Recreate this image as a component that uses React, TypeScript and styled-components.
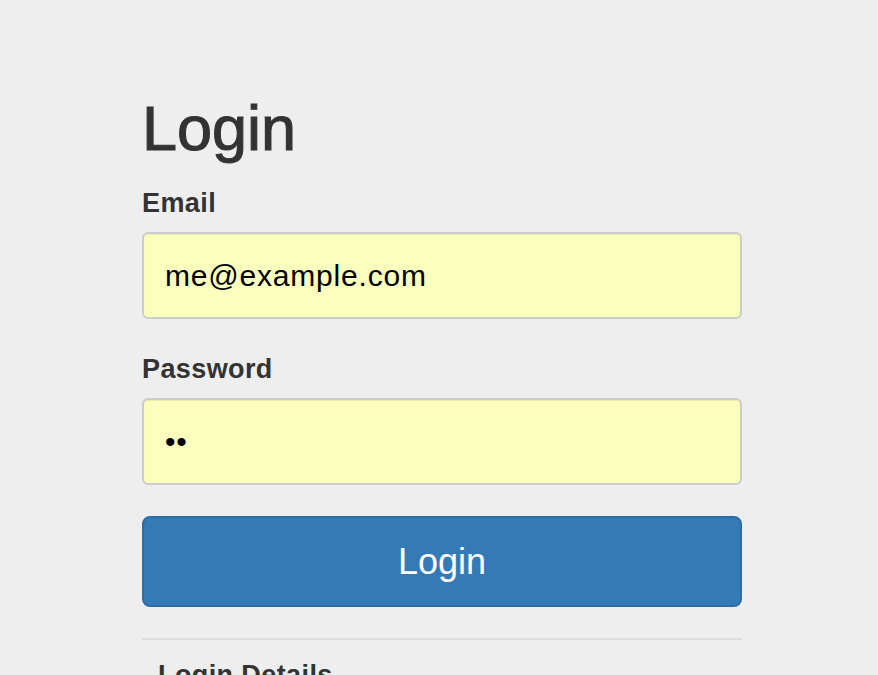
import styled, { createGlobalStyle } from "styled-components";
import { FC } from "react";

const GlobalStyle = createGlobalStyle`
  body {
    margin: 0;
    background-color: #eeeeee;
    font-family: "Liberation Sans", Helvetica, Arial, sans-serif;
    color: #333333;
  }
`;

const Page = styled.div`
  padding: 94px 0 0 142px;
  min-height: 675px;
  box-sizing: border-box;
  overflow: hidden;
`;

const Form = styled.form`
  width: 600px;
  display: flex;
  flex-direction: column;
`;

const Title = styled.h1`
  margin: 0 0 24px;
  font-size: 63px;
  line-height: 69px;
  font-weight: 500;
  color: #333333;
  -webkit-text-stroke: 1.1px #333333;
`;

const Group = styled.div<{ $gap: number }>`
  display: flex;
  flex-direction: column;
  margin-bottom: ${(p) => p.$gap}px;
`;

const Label = styled.label`
  display: block;
  margin-bottom: 13px;
  font-size: 27px;
  line-height: 32px;
  font-weight: 700;
  letter-spacing: 0.4px;
  color: #333333;
`;

const Input = styled.input`
  box-sizing: border-box;
  width: 100%;
  height: 87px;
  padding: 0 21px;
  border: 2px solid #cccccc;
  border-radius: 6px;
  background-color: #faffbd;
  box-shadow: inset 0 1px 1px rgba(0, 0, 0, 0.075);
  font-family: "Liberation Sans", Helvetica, Arial, sans-serif;
  font-size: 30px;
  letter-spacing: 0.8px;
  color: #000000;
  outline: none;
`;

const Button = styled.button`
  box-sizing: border-box;
  width: 100%;
  height: 91px;
  border: 2px solid #2e6da4;
  border-radius: 8px;
  background-color: #337ab7;
  color: #ffffff;
  font-family: "Liberation Sans", Helvetica, Arial, sans-serif;
  font-size: 36px;
  cursor: pointer;
`;

const Divider = styled.hr`
  margin: 31px 0 0;
  border: 0;
  border-top: 2px solid #dddddd;
`;

const Details = styled.h4`
  margin: 19px 0 0;
  padding-left: 16px;
  font-size: 27px;
  line-height: 32px;
  font-weight: 700;
  letter-spacing: 0.4px;
  color: #333333;
`;

const App: FC = () => {
  return (
    <>
      <GlobalStyle />
      <Page>
        <Form onSubmit={(e) => e.preventDefault()}>
          <Title>Login</Title>
          <Group $gap={34}>
            <Label htmlFor="email">Email</Label>
            <Input id="email" type="email" defaultValue="me@example.com" />
          </Group>
          <Group $gap={31}>
            <Label htmlFor="password">Password</Label>
            <Input id="password" type="password" defaultValue="ab" />
          </Group>
          <Button type="submit">Login</Button>
          <Divider />
          <Details>Login Details</Details>
        </Form>
      </Page>
    </>
  );
};

export default App;
